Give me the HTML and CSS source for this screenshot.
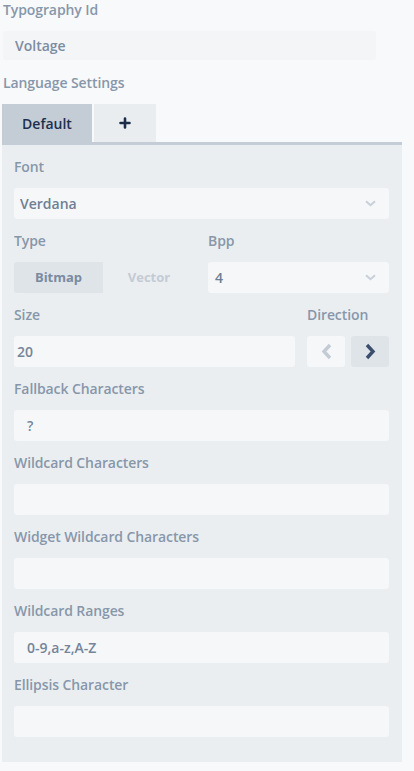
FILE: index.html
```html
<!DOCTYPE html>
<html>
<head>
<meta charset="utf-8">
<link rel="stylesheet" href="styles.css">
</head>
<body>
<div class="page">
  <div class="label top">Typography Id</div>
  <div class="input top-input">Voltage</div>
  <div class="label top lang">Language Settings</div>
  <div class="tabs">
    <div class="tab active">Default</div>
    <div class="tab add">
      <svg width="12" height="12" viewBox="0 0 12 12"><path d="M6 1.5v9M1.5 6h9" stroke="#1c2c48" stroke-width="2.6" stroke-linecap="round"/></svg>
    </div>
  </div>
  <div class="panel">
    <div class="field">
      <div class="label">Font</div>
      <div class="input select sel-font"><span>Verdana</span><svg class="chev" width="11" height="7" viewBox="0 0 11 7"><path d="M1 1.2l4.5 4 4.5-4" stroke="#c8d0d8" stroke-width="2" fill="none"/></svg></div>
    </div>
    <div class="row">
      <div class="field col-type">
        <div class="label">Type</div>
        <div class="toggle">
          <div class="tog on">Bitmap</div>
          <div class="tog off">Vector</div>
        </div>
      </div>
      <div class="field col-bpp">
        <div class="label">Bpp</div>
        <div class="input select sel-bpp"><span>4</span><svg class="chev" width="11" height="7" viewBox="0 0 11 7"><path d="M1 1.2l4.5 4 4.5-4" stroke="#c8d0d8" stroke-width="2" fill="none"/></svg></div>
      </div>
    </div>
    <div class="row">
      <div class="field col-size">
        <div class="label">Size</div>
        <div class="input size-input">20</div>
      </div>
      <div class="field col-dir">
        <div class="label">Direction</div>
        <div class="dirs">
          <div class="dir left"><svg width="11" height="17" viewBox="0 0 11 17"><path d="M9 2L3 8.5 9 15" stroke="#c3cbd5" stroke-width="3.4" fill="none"/></svg></div>
          <div class="dir right"><svg width="11" height="17" viewBox="0 0 11 17"><path d="M2 2l6 6.5L2 15" stroke="#3b4e6d" stroke-width="3.4" fill="none"/></svg></div>
        </div>
      </div>
    </div>
    <div class="field">
      <div class="label">Fallback Characters</div>
      <div class="input pad">?</div>
    </div>
    <div class="field">
      <div class="label">Wildcard Characters</div>
      <div class="input pad"></div>
    </div>
    <div class="field">
      <div class="label">Widget Wildcard Characters</div>
      <div class="input pad"></div>
    </div>
    <div class="field">
      <div class="label">Wildcard Ranges</div>
      <div class="input pad">0-9,a-z,A-Z</div>
    </div>
    <div class="field">
      <div class="label">Ellipsis Character</div>
      <div class="input pad"></div>
    </div>
  </div>
</div>
</body>
</html>
```
FILE: styles.css
```css
html, body {
  margin: 0;
  padding: 0;
  background: #f8f9fb;
}
body {
  font-family: "Open Sans", "Noto Sans", sans-serif;
  font-size: 14px;
  font-weight: 600;
  color: #8797aa;
}
.page {
  width: 400px;
  padding: 0 0 0 2px;
}
.label {
  line-height: 19px;
  height: 19px;
  color: #8797aa;
  white-space: nowrap;
  letter-spacing: -0.1px;
}
.label.top {
  padding-left: 1px;
}
.label.lang {
  margin-top: 13px;
}
.input {
  box-sizing: border-box;
  height: 31px;
  background: #f5f7f9;
  border-radius: 3px;
  margin-top: 12px;
  line-height: 31px;
  color: #75859a;
  font-weight: 600;
}
.top-input {
  width: 373px;
  margin-left: 1px;
  height: 29px;
  line-height: 29px;
  padding-left: 12px;
  background: #f3f5f7;
  color: #7d8ca0;
}
.tabs {
  display: flex;
  gap: 2px;
  margin-top: 12px;
  border-bottom: 3px solid #c4ccd6;
}
.tab {
  height: 38px;
  display: flex;
  align-items: center;
  justify-content: center;
  font-size: 14px;
  color: #1d2f4f;
}
.tab.active {
  width: 90px;
  background: #c4ccd6;
}
.tab.add {
  width: 62px;
  background: #e9edf0;
}
.panel {
  width: 400px;
  box-sizing: border-box;
  background: #ebeef1;
  padding: 12px 13px 25px 12px;
  display: flex;
  flex-direction: column;
  gap: 12px;
}
.row {
  display: flex;
}
.select {
  display: flex;
  align-items: center;
  justify-content: space-between;
  padding: 0 13px 0 6px;
  color: #6f7f94;
}
.chev {
  display: block;
}
.col-type {
  width: 194px;
}
.col-bpp {
  flex: 1;
}
.sel-bpp {
  padding-left: 7px;
}
.toggle {
  display: flex;
  margin-top: 12px;
  height: 31px;
}
.tog {
  height: 31px;
  line-height: 31px;
  text-align: center;
  font-size: 13px;
  font-weight: 700;
}
.tog.on {
  width: 89px;
  background: #dfe4e9;
  border-radius: 3px 0 0 3px;
  color: #7b8aa0;
}
.tog.off {
  width: 92px;
  color: #c3cbd4;
}
.col-size {
  width: 293px;
}
.size-input {
  width: 281px;
  padding-left: 3px;
}
.col-dir {
  flex: 1;
}
.dirs {
  display: flex;
  gap: 6px;
  margin-top: 12px;
}
.dir {
  width: 38px;
  height: 31px;
  border-radius: 3px;
  display: flex;
  align-items: center;
  justify-content: center;
}
.dir.left {
  background: #f5f7f9;
}
.dir.right {
  background: #dfe4e9;
}
.pad {
  padding-left: 13px;
}
```
